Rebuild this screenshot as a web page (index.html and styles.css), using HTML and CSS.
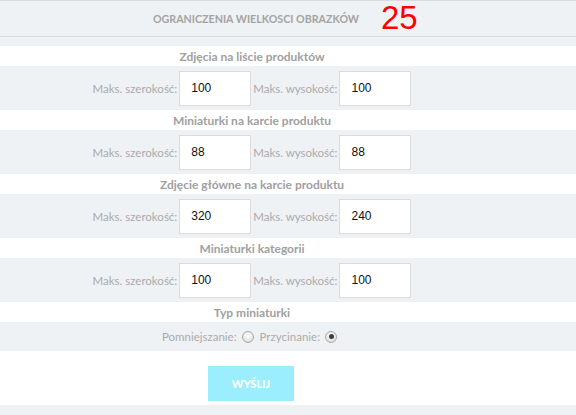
FILE: index.html
```html
<!DOCTYPE html>
<html lang="pl">
<head>
<meta charset="utf-8">
<title>Ograniczenia wielkości obrazków</title>
<link rel="stylesheet" href="styles.css">
</head>
<body>
<div class="header">
  <span class="header-title">OGRANICZENIA WIELKOSCI OBRAZKÓW</span>
  <span class="badge">25</span>
</div>
<div class="spacer"></div>
<form class="form">
  <div class="title-row">Zdjęcia na liście produktów</div>
  <div class="field-row">
    <label class="lbl">Maks. szerokość:</label><input class="inp" type="text" value="100">
    <label class="lbl">Maks. wysokość:</label><input class="inp" type="text" value="100">
  </div>
  <div class="title-row">Miniaturki na karcie produktu</div>
  <div class="field-row">
    <label class="lbl">Maks. szerokość:</label><input class="inp" type="text" value="88">
    <label class="lbl">Maks. wysokość:</label><input class="inp" type="text" value="88">
  </div>
  <div class="title-row">Zdjęcie główne na karcie produktu</div>
  <div class="field-row">
    <label class="lbl">Maks. szerokość:</label><input class="inp" type="text" value="320">
    <label class="lbl">Maks. wysokość:</label><input class="inp" type="text" value="240">
  </div>
  <div class="title-row">Miniaturki kategorii</div>
  <div class="field-row">
    <label class="lbl">Maks. szerokość:</label><input class="inp" type="text" value="100">
    <label class="lbl">Maks. wysokość:</label><input class="inp" type="text" value="100">
  </div>
  <div class="title-row">Typ miniaturki</div>
  <div class="radio-row">
    <label class="lbl">Pomniejszanie:</label><span class="radio"></span>
    <label class="lbl">Przycinanie:</label><span class="radio checked"></span>
  </div>
  <div class="button-row">
    <button class="btn" type="button">WYŚLIJ</button>
  </div>
  <div class="footer"></div>
</form>
</body>
</html>
```
FILE: styles.css
```css
* { box-sizing: border-box; }
html, body { margin: 0; padding: 0; background: #fff; }
body { font-family: Lato, "Open Sans", sans-serif; width: 576px; height: 415px; overflow: hidden; }

.header {
  position: relative;
  height: 37px;
  border-top: 1px solid #d9dcdf;
  border-bottom: 1px solid #d9dcdf;
  background: #eff2f5;
  display: flex;
  align-items: center;
  justify-content: center;
  padding-right: 64px;
}
.header-title {
  font-size: 10.7px;
  font-weight: bold;
  color: #a3a3a3;
}
.badge {
  position: absolute;
  left: 381px;
  top: -1px;
  font-family: "Liberation Sans", Arial, sans-serif;
  font-size: 33px;
  color: #ff0000;
  line-height: 36px;
}
.spacer { height: 9px; background: #eff2f5; }

.form { margin: 0; }
.title-row {
  height: 20px;
  background: #fff;
  display: flex;
  align-items: center;
  justify-content: center;
  padding-right: 72px;
  font-size: 12px;
  font-weight: bold;
  color: #a0a0a0;
}
.field-row {
  height: 44px;
  background: #eff2f5;
  display: flex;
  align-items: center;
  justify-content: center;
  padding-right: 72px;
  gap: 2px;
}
.lbl {
  font-size: 11.5px;
  color: #ababab;
}
.inp {
  width: 72px;
  height: 35px;
  border: 1px solid #dcdcdc;
  background: #fff;
  padding: 0 0 0 11px;
  font-family: "Liberation Sans", Arial, sans-serif;
  font-size: 12px;
  color: #111;
  outline: none;
  margin: 0;
}
.radio-row {
  height: 29px;
  background: #eff2f5;
  display: flex;
  align-items: center;
  justify-content: center;
  padding-right: 76px;
  gap: 5px;
}
.radio {
  width: 12px;
  height: 12px;
  border-radius: 50%;
  border: 1px solid #a9a9a9;
  background: radial-gradient(circle at 50% 35%, #ffffff 0%, #e6e6e6 60%, #cfcfcf 100%);
  margin-right: 1px;
  position: relative;
}
.radio.checked::after {
  content: "";
  position: absolute;
  left: 2.5px;
  top: 2.5px;
  width: 5px;
  height: 5px;
  border-radius: 50%;
  background: #3c3c3c;
}
.button-row {
  height: 54px;
  background: #fff;
  display: flex;
  justify-content: center;
  padding: 15px 74px 0 0;
}
.btn {
  width: 86px;
  height: 35px;
  border: none;
  background: #9beefe;
  color: #fff;
  font-family: Lato, sans-serif;
  font-weight: 900;
  font-size: 11px;
  cursor: pointer;
}
.footer { height: 10px; background: #eff2f5; }
```
